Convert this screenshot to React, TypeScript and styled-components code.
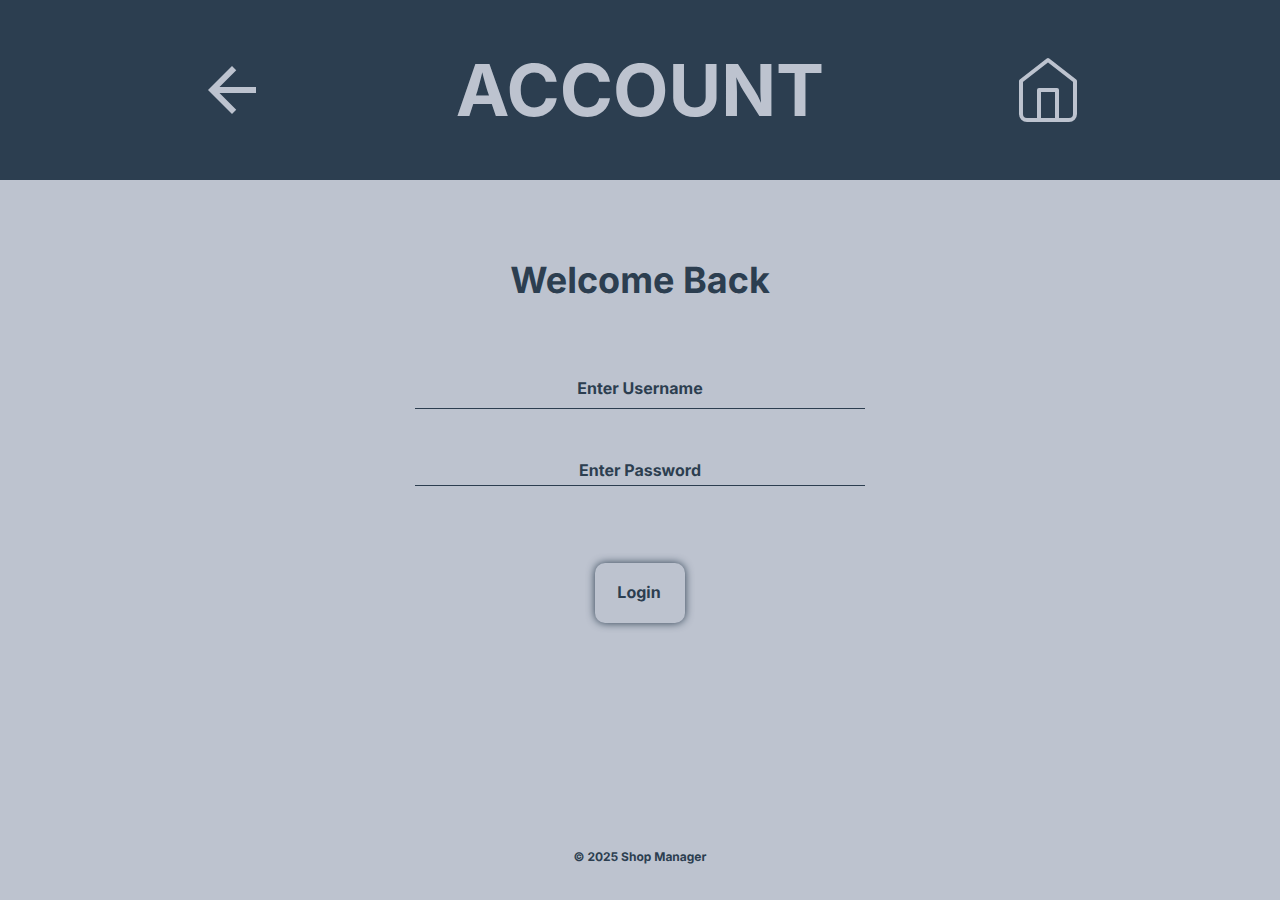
import React from "react";
import styled, { createGlobalStyle } from "styled-components";

const dark = "#2c3e50";
const light = "#bdc3cf";

const GlobalStyle = createGlobalStyle`
  *, *::before, *::after { box-sizing: border-box; }
  body {
    margin: 0;
    background: ${light};
    color: ${dark};
    font-family: Inter, "Liberation Sans", sans-serif;
    font-weight: 700;
    text-rendering: geometricPrecision;
  }
`;

const Page = styled.div`
  display: flex;
  flex-direction: column;
  min-height: 100vh;
`;

const Header = styled.header`
  display: flex;
  align-items: center;
  justify-content: space-evenly;
  height: 180px;
  padding: 0 8px;
  background: ${dark};
  color: ${light};
`;

const Title = styled.h1`
  margin: 0;
  font-size: 72px;
  line-height: 88px;
  text-rendering: auto;
`;

const IconLink = styled.a`
  display: flex;
  color: inherit;
`;

const Main = styled.main`
  display: flex;
  flex: 1;
  flex-direction: column;
  align-items: center;
  padding: 78px 16px 0;
`;

const Heading = styled.h2`
  margin: 0;
  font-size: 36px;
  line-height: 44px;
`;

const Form = styled.form`
  display: flex;
  flex-direction: column;
  align-items: center;
  width: 100%;
  max-width: 450px;
  margin-top: 66px;
`;

const Field = styled.input<{ $height: number }>`
  width: 100%;
  height: ${(p) => p.$height}px;
  padding: 0;
  border: 0;
  border-bottom: 1px solid ${dark};
  border-radius: 0;
  background: transparent;
  color: ${dark};
  font: inherit;
  font-size: 16px;
  text-align: center;
  text-rendering: inherit;
  outline: none;

  &::placeholder {
    color: ${dark};
    opacity: 1;
  }

  & + & {
    margin-top: 46px;
  }
`;

const LoginButton = styled.button`
  width: 90px;
  height: 60px;
  margin-top: 77px;
  padding: 0 2px 2px 0;
  border: 0;
  border-radius: 10px;
  background: ${light};
  box-shadow: 0 0 8px ${dark};
  color: ${dark};
  font: inherit;
  font-size: 16px;
  text-rendering: inherit;
  cursor: pointer;
`;

const Footer = styled.footer`
  padding: 16px 16px 35px;
  font-size: 12px;
  line-height: 16px;
  text-align: center;
`;

const BackIcon = () => (
  <svg width="72" height="72" viewBox="0 0 24 24" fill="currentColor" aria-hidden="true">
    <path d="M20 11H7.83l5.59-5.59L12 4l-8 8 8 8 1.41-1.41L7.83 13H20v-2z" />
  </svg>
);

const HomeIcon = () => (
  <svg
    width="72"
    height="72"
    viewBox="0 0 72 72"
    fill="none"
    stroke="currentColor"
    strokeWidth="4"
    strokeLinejoin="round"
    aria-hidden="true"
  >
    <path d="M9 27 36 6l27 21v33a6 6 0 0 1-6 6H15a6 6 0 0 1-6-6z" />
    <path d="M27 66V36h18v30" />
  </svg>
);

export default function App() {
  return (
    <Page>
      <GlobalStyle />
      <Header>
        <IconLink href="#back" aria-label="Back">
          <BackIcon />
        </IconLink>
        <Title>ACCOUNT</Title>
        <IconLink href="#home" aria-label="Home">
          <HomeIcon />
        </IconLink>
      </Header>
      <Main>
        <Heading>Welcome Back</Heading>
        <Form onSubmit={(e: React.FormEvent) => e.preventDefault()}>
          <Field $height={41} type="text" placeholder="Enter Username" aria-label="Username" />
          <Field $height={31} type="password" placeholder="Enter Password" aria-label="Password" />
          <LoginButton type="submit">Login</LoginButton>
        </Form>
      </Main>
      <Footer>© 2025 Shop Manager</Footer>
    </Page>
  );
}
